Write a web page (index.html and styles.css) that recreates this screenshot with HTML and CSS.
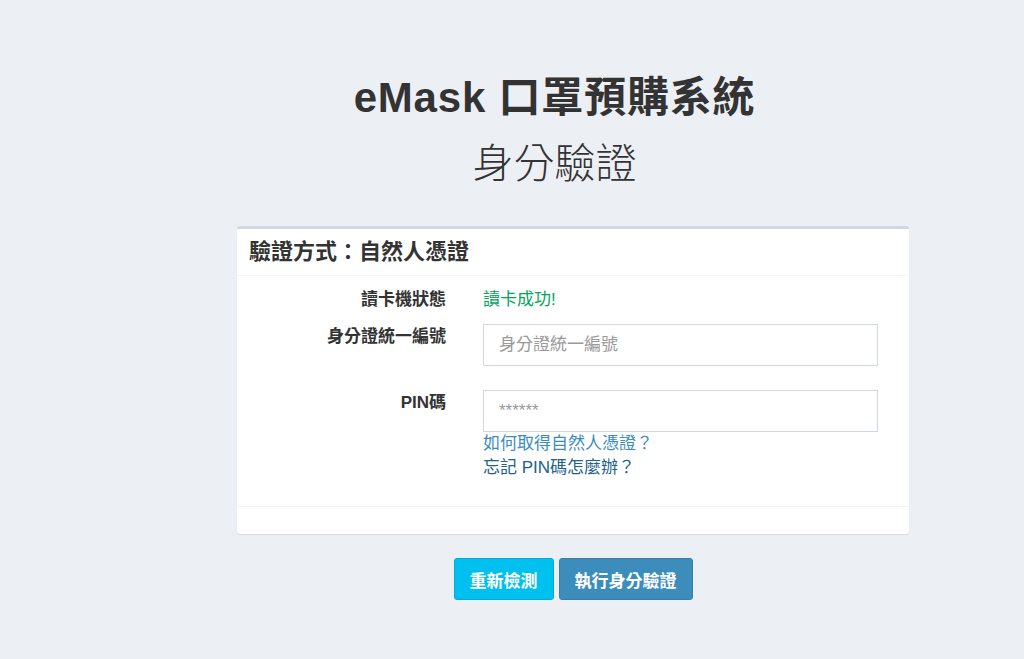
FILE: index.html
```html
<!DOCTYPE html>
<html lang="zh-Hant">
<head>
    <meta charset="UTF-8">
    <meta name="viewport" content="width=device-width, initial-scale=1.0">
    <title>eMask 口罩預購系統 - 身分驗證</title>
    <link rel="stylesheet" href="styles.css">
</head>
<body>

<div class="hero">
    <h1>eMask 口罩預購系統</h1>
    <h2>身分驗證</h2>
</div>

<div class="wrapper">
    <div class="box">
        <div class="box-header">
            <h3>驗證方式：自然人憑證</h3>
        </div>
        <form class="box-body" id="verifyForm">
            <div class="form-row row-status">
                <label>讀卡機狀態</label>
                <div class="status-ok">讀卡成功!</div>
            </div>
            <div class="form-row row-id">
                <label for="idNo">身分證統一編號</label>
                <div>
                    <input type="text" id="idNo" name="idNo" placeholder="身分證統一編號">
                </div>
            </div>
            <div class="form-row">
                <label for="pin">PIN碼</label>
                <div>
                    <input type="password" id="pin" name="pin" placeholder="******">
                    <a class="help-link" href="#">如何取得自然人憑證？</a>
                    <a class="help-link visited" href="#">忘記 PIN碼怎麼辦？</a>
                </div>
            </div>
        </form>
        <div class="box-footer"></div>
    </div>

    <div class="actions">
        <button type="button" class="btn btn-info">重新檢測</button>
        <button type="submit" form="verifyForm" class="btn btn-primary">執行身分驗證</button>
    </div>
</div>

</body>
</html>
```

FILE: styles.css
```css
body {
    margin: 0;
    padding: 76px 0 40px;
    background-color: #ecf0f5;
    color: #333;
    font-family: "Liberation Sans", Arial, "Noto Sans CJK TC", sans-serif;
    font-size: 17px;
    line-height: 24px;
}
.hero {
    width: 709px;
    margin-left: 200px;
    text-align: center;
}
.hero h1 {
    margin: 0;
    font-size: 42px;
    line-height: 44px;
    font-weight: 700;
    letter-spacing: 0.8px;
}
.hero h2 {
    margin: 22px 0 0;
    font-size: 41px;
    line-height: 44px;
    font-weight: 300;
}
.wrapper {
    width: 672px;
    margin: 40px 0 0 237px;
}
.box {
    background: white;
    border-top: 3px solid #d2d6de;
    border-radius: 3px;
    box-shadow: 0 1px 1px rgba(0, 0, 0, 0.1);
}
.box-header {
    padding: 10px 12px;
    border-bottom: 1px solid #f4f4f4;
}
.box-header h3 {
    margin: 0;
    font-size: 22px;
    line-height: 26px;
    font-weight: 700;
}
.box-body {
    padding: 12px 31px 26px 0;
}
.form-row {
    display: grid;
    grid-template-columns: 209px 1fr;
    column-gap: 37px;
    align-items: start;
}
.form-row label {
    padding-top: 1px;
    text-align: right;
    font-weight: 700;
}
.row-status {
    margin-bottom: 12px;
}
.row-status label {
    padding-top: 0;
}
.row-id {
    margin-bottom: 24px;
}
.status-ok {
    color: #00a65a;
}
input[type="text"],
input[type="password"] {
    display: block;
    box-sizing: border-box;
    width: 100%;
    height: 42px;
    padding: 0 15px;
    border: 1px solid #d2d6de;
    border-radius: 0;
    font-family: inherit;
    font-size: 17px;
    color: #555;
}
input::placeholder {
    color: #999;
}
.help-link {
    display: block;
    color: #3c8dbc;
    text-decoration: none;
}
.help-link.visited {
    color: #22618c;
}
.box-footer {
    height: 27px;
    border-top: 1px solid #f4f4f4;
}
.actions {
    display: flex;
    justify-content: center;
    gap: 5px;
    margin-top: 24px;
}
.btn {
    height: 42px;
    padding: 0 15px;
    border: 1px solid transparent;
    border-radius: 3px;
    color: white;
    font-family: inherit;
    font-size: 17px;
    font-weight: 700;
    cursor: pointer;
}
.btn-info {
    background-color: #00c0ef;
    border-color: #00acd6;
}
.btn-primary {
    background-color: #3c8dbc;
    border-color: #367fa9;
}
```
